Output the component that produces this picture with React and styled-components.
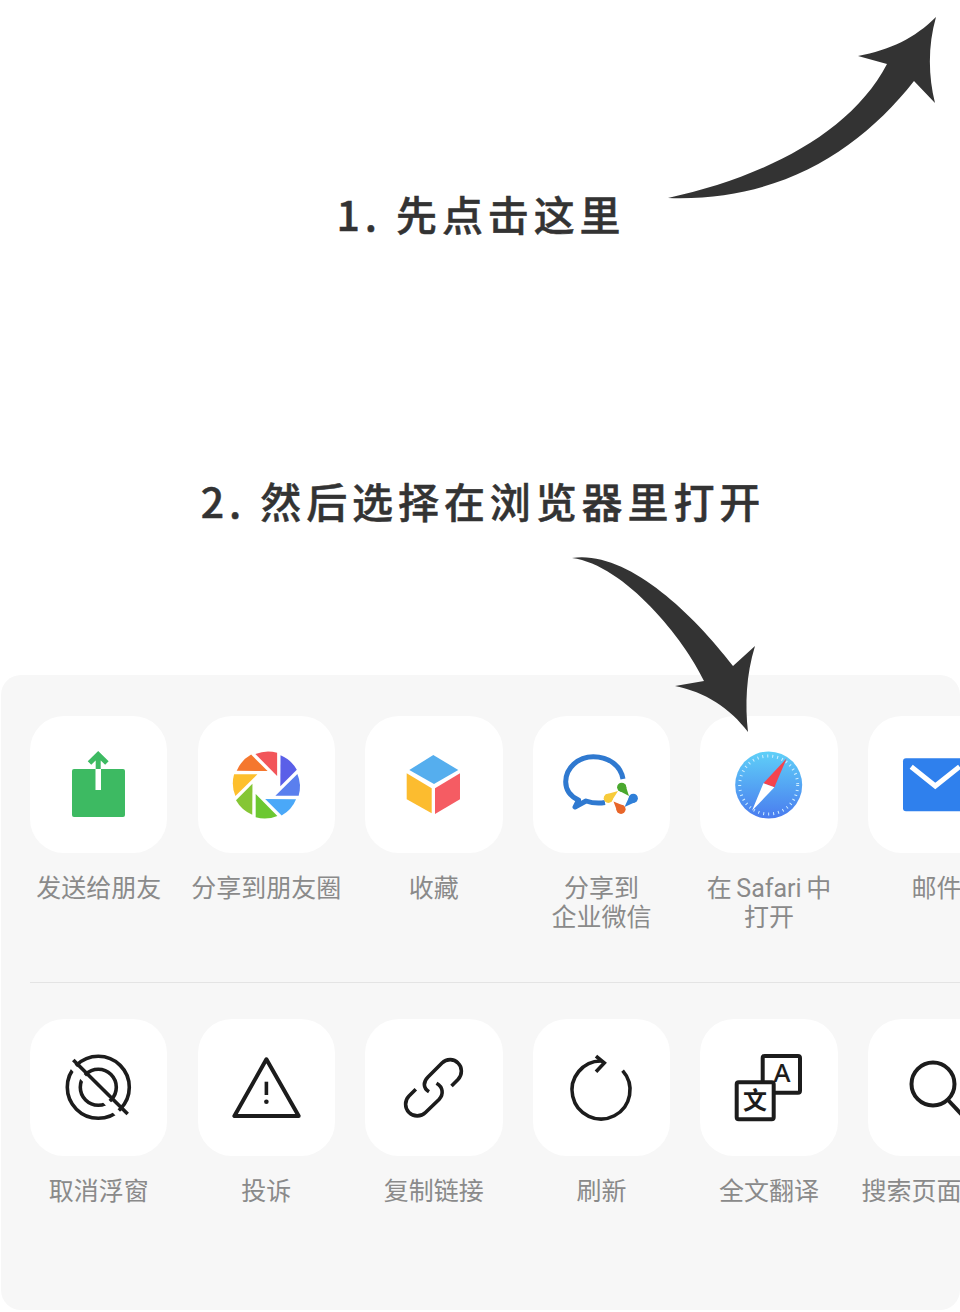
import styled, { createGlobalStyle } from 'styled-components'

const GlobalStyle = createGlobalStyle`
html, body {
  margin: 0;
  padding: 0;
  background: #fff;
}
body {
  font-family: "Noto Sans CJK SC", "Noto Sans", sans-serif;
}
`

const Page = styled.div`
position: relative;
width: 960px;
height: 1312px;
overflow: hidden;
background: #fff;
`

const Heading = styled.h2`
margin: ${props => props.$top}px 0 0;
height: 60px;
padding-left: ${props => props.$indent}px;
line-height: 60px;
text-align: center;
font-size: 41px;
font-weight: 500;
letter-spacing: 4.9px;
-webkit-text-stroke: 0.5px #333;
color: #333;
`

const Sheet = styled.section`
margin: 145px 0 0 1px;
height: 635px;
box-sizing: border-box;
padding: 41px 0 0 29px;
background: #f7f7f7;
border-radius: 20px;
overflow: hidden;
`

const Row = styled.div`
display: grid;
grid-template-columns: repeat(6, 137.4px);
column-gap: 30.2px;
`

const Divider = styled.div`
height: 1px;
margin: 50px 0 36px;
background: #e4e4e4;
`

const Item = styled.div`
display: flex;
flex-direction: column;
align-items: center;
`

const Card = styled.div`
width: 137.4px;
height: 137px;
background: #fff;
border-radius: 34px;

svg {
  display: block;
  width: 100%;
  height: 100%;
}
`

const Label = styled.div`
width: 160px;
flex: none;
margin-top: 21px;
min-height: 57px;
font-family: Roboto, "Noto Sans CJK SC", sans-serif;
font-size: 25px;
line-height: 29px;
font-weight: 400;
word-spacing: -1.5px;
text-align: center;
white-space: pre-line;
color: #8a8a8a;
`

const Arrow = styled.svg`
position: absolute;
left: 0;
top: 0;
width: 960px;
height: 1312px;
pointer-events: none;
fill: #333;
`

const CardIcon = ({ children }) => (
  <svg viewBox="0 0 137.4 137">{children}</svg>
)

const blades = ['#f2555a', '#5a5fe8', '#5a7fee', '#4aa8f8', '#6cc832', '#85c635', '#fdbf2d', '#f5772e']

const Petal = ({ x, y, tx, ty, r = 4.6, color }) => {
  const len = Math.hypot(tx - x, ty - y)
  const nx = -(ty - y) / len * r
  const ny = (tx - x) / len * r
  return (
    <g fill={color}>
      <circle cx={x} cy={y} r={r} />
      <polygon points={`${x + nx},${y + ny} ${x - nx},${y - ny} ${tx},${ty}`} />
    </g>
  )
}

const ShareIcon = () => (
  <CardIcon>
    <rect x="42" y="53" width="53" height="48" rx="2" fill="#3dba62" />
    <rect x="65.5" y="53" width="5.5" height="21" fill="#fff" />
    <path d="M68.2 53V39M59.5 47l8.7-8.5 8.7 8.5" fill="none" stroke="#3dba62" strokeWidth="5" />
  </CardIcon>
)

const MomentsIcon = () => (
  <CardIcon>
    <g transform="translate(68.4 69)">
      {blades.map((color, i) => (
        <path
          key={color}
          transform={`rotate(${i * 45})`}
          d="M-11 -31 A33 33 0 0 1 10.7 -32.3 L10.7 -9 Z"
          fill={color}
        />
      ))}
    </g>
  </CardIcon>
)

const CubeIcon = () => (
  <CardIcon>
    <polygon points="68.3,39 93.3,54 69,68 44.3,54" fill="#55aeee" />
    <polygon points="41.7,57.3 66.7,72.3 66.7,97.3 41.7,83.3" fill="#fcbc2f" />
    <polygon points="70,72.3 95,57.3 95,83.3 70,98" fill="#f55c63" />
  </CardIcon>
)

const WeComIcon = () => (
  <CardIcon>
    <path
      d="M90 63C88 50 76 40.7 60.3 40.7C45 40.7 32.7 52 32.7 65.7C32.7 73 37 80 45.5 84L42 91L53 85C59 87 66 87.5 72 86.5"
      fill="none"
      stroke="#2f79d0"
      strokeWidth="5"
      strokeLinejoin="round"
    />
    <Petal x={88.7} y={71.3} tx={96} ty={80} color="#4aa82e" />
    <Petal x={100.3} y={82.3} tx={91.5} ty={91} color="#2f7fd8" />
    <Petal x={88} y={93.3} tx={80.5} ty={85.5} color="#e8662a" />
    <Petal x={75.3} y={82.3} tx={85} ty={75} color="#f7cb3a" />
  </CardIcon>
)

const SafariIcon = () => (
  <CardIcon>
    <defs>
      <linearGradient id="safari" x1="0" y1="0" x2="0" y2="1">
        <stop offset="0" stopColor="#5fd0f8" />
        <stop offset="1" stopColor="#4a7cef" />
      </linearGradient>
    </defs>
    <circle cx="68.7" cy="69" r="33.5" fill="url(#safari)" />
    <circle cx="68.7" cy="69" r="29" fill="none" stroke="#cfeeff" strokeWidth="3" strokeDasharray="1 4" />
    <polygon points="86.7,42.3 63.4,67.3 74.4,71.3" fill="#f4444e" />
    <polygon points="52,94.7 63.4,67.3 74.4,71.3" fill="#fff" />
  </CardIcon>
)

const MailIcon = () => (
  <CardIcon>
    <rect x="35" y="42.3" width="70" height="53" rx="3" fill="#2f80ed" />
    <path d="M43.2 50.7L67.3 70L91.6 50.7" fill="none" stroke="#fff" strokeWidth="5" />
  </CardIcon>
)

const FloatOffIcon = () => (
  <CardIcon>
    <g fill="none" stroke="#1c1c1c" strokeWidth="3.6">
      <circle cx="68.3" cy="68.3" r="31" />
      <circle cx="68.3" cy="68.3" r="18" />
      <path d="M40 45L92 99" stroke="#fff" strokeWidth="6" />
      <path d="M43.3 41L97.7 95" />
    </g>
  </CardIcon>
)

const ReportIcon = () => (
  <CardIcon>
    <path d="M68.4 40.3L36.4 97H100.7Z" fill="none" stroke="#1c1c1c" strokeWidth="4" strokeLinejoin="round" />
    <path d="M68.4 62.7V76" stroke="#1c1c1c" strokeWidth="3.6" />
    <circle cx="68.4" cy="82.7" r="2.3" fill="#1c1c1c" />
  </CardIcon>
)

const LinkIcon = () => (
  <CardIcon>
    <g fill="none" stroke="#1c1c1c" strokeWidth="3.6">
      <path d="M86.5 67L93 60.5C97.5 56 97.5 48 93 44C89 39.5 81.5 39.5 77 44L63 58C58 63 58 69 64 72.7" />
      <path d="M50.8 70.3L44 77C39.5 81.5 39.5 89 44 93.5C48.5 98 56 98 60.5 93.5L74 80.5C79 75 78 68 71.5 64.3" />
    </g>
  </CardIcon>
)

const RefreshIcon = () => (
  <CardIcon>
    <g fill="none" stroke="#1c1c1c" strokeWidth="3.6">
      <path d="M89.6 51.6A29 29 0 1 1 69 42" />
      <path d="M63 37L71.3 44L63 52.7" />
    </g>
  </CardIcon>
)

const TranslateIcon = () => (
  <CardIcon>
    <rect x="62.7" y="37" width="37.3" height="36.7" rx="2" fill="#fff" stroke="#1c1c1c" strokeWidth="4" />
    <rect x="36.7" y="63.3" width="37" height="37" rx="2" fill="#fff" stroke="#1c1c1c" strokeWidth="4" />
    <text x="82" y="63" textAnchor="middle" fontFamily="'Noto Sans', sans-serif" fontSize="26" fontWeight="500" fill="#1c1c1c">A</text>
    <text x="55" y="90" textAnchor="middle" fontFamily="'Noto Sans CJK SC', sans-serif" fontSize="24" fontWeight="700" fill="#1c1c1c">文</text>
  </CardIcon>
)

const SearchIcon = () => (
  <CardIcon>
    <g fill="none" stroke="#1c1c1c" strokeWidth="4">
      <circle cx="65" cy="65" r="21.5" />
      <path d="M80 81L96 98" />
    </g>
  </CardIcon>
)

const shareItems = [
  { label: '发送给朋友', Icon: ShareIcon },
  { label: '分享到朋友圈', Icon: MomentsIcon },
  { label: '收藏', Icon: CubeIcon },
  { label: '分享到\n企业微信', Icon: WeComIcon },
  { label: '在 Safari 中\n打开', Icon: SafariIcon },
  { label: '邮件', Icon: MailIcon },
]

const toolItems = [
  { label: '取消浮窗', Icon: FloatOffIcon },
  { label: '投诉', Icon: ReportIcon },
  { label: '复制链接', Icon: LinkIcon },
  { label: '刷新', Icon: RefreshIcon },
  { label: '全文翻译', Icon: TranslateIcon },
  { label: '搜索页面内容', Icon: SearchIcon },
]

const ItemRow = ({ items }) => (
  <Row>
    {items.map(({ label, Icon }) => (
      <Item key={label}>
        <Card>
          <Icon />
        </Card>
        <Label>{label}</Label>
      </Item>
    ))}
  </Row>
)

const App = () => {
  return (
    <Page>
      <GlobalStyle />
      <Heading $top={183} $indent={2}>1. 先点击这里</Heading>
      <Heading $top={227} $indent={6}>2. 然后选择在浏览器里打开</Heading>
      <Sheet>
        <ItemRow items={shareItems} />
        <Divider />
        <ItemRow items={toolItems} />
      </Sheet>
      <Arrow viewBox="0 0 960 1312">
        <path d="M668 198C760 178 850 135 887 64L858 56C890 50 915 38 936 17C928 45 928 75 935 103L914 81C860 150 780 202 668 198Z" />
        <path d="M572 558C625 550 690 610 733 666L755 646C746 675 745 705 748 732C730 708 705 692 675 686L704 681C685 640 625 565 572 558Z" />
      </Arrow>
    </Page>
  )
}

export default App
